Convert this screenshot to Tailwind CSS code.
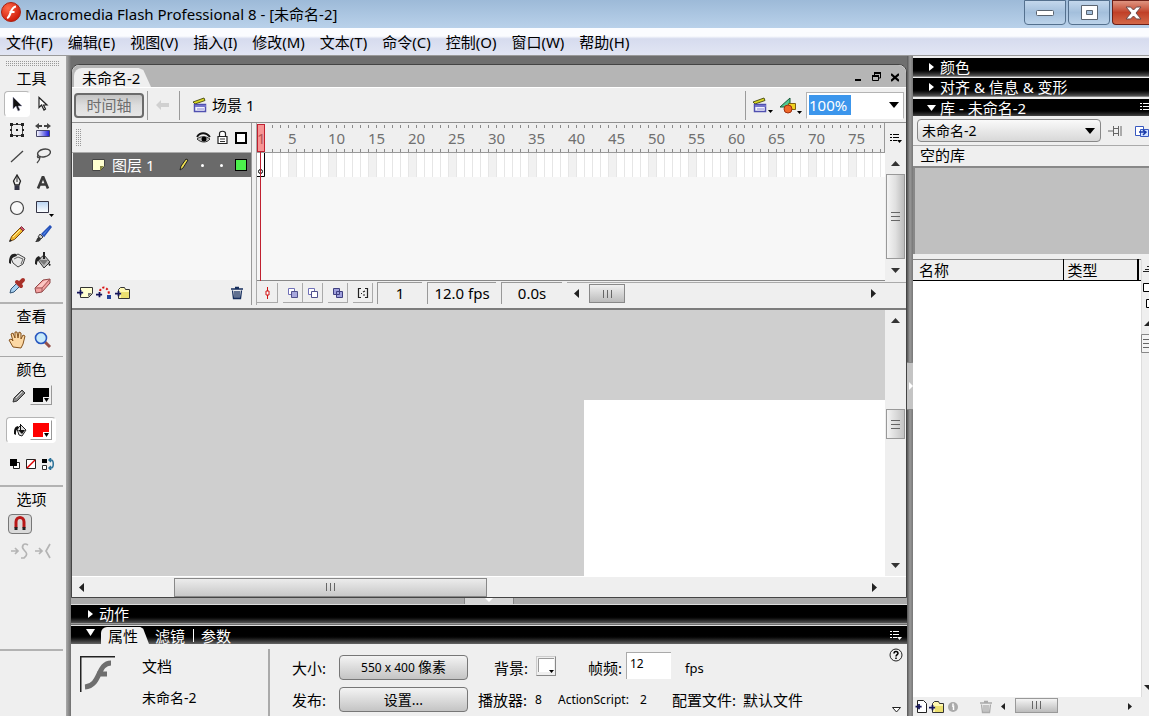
<!DOCTYPE html>
<html lang="zh-CN">
<head>
<meta charset="utf-8">
<title>Macromedia Flash Professional 8 - [未命名-2]</title>
<script src="https://cdn.jsdelivr.net/npm/@tailwindcss/browser@4"></script>
</head>
<body class="flex h-screen flex-col overflow-hidden bg-[#7c7c7c] font-['Noto_Sans','Noto_Sans_CJK_SC',sans-serif] text-[15px] leading-5 text-black">

<svg class="absolute size-0" aria-hidden="true">
  <defs>
    <pattern id="ticks" width="8" height="30" patternUnits="userSpaceOnUse"><path d="M7.500 2v3M7.500 26v4" stroke="#8a8a8a"/></pattern>
    <pattern id="frames" width="40" height="24" patternUnits="userSpaceOnUse"><rect width="40" height="24" fill="#fff"/><rect x="32" width="8" height="24" fill="#f1f1f1"/><path d="M7.500 0v24M15.500 0v24M23.500 0v24M31.500 0v24M39.500 0v24" stroke="#e6e6e6"/></pattern>
    <linearGradient id="blueFade"><stop offset="0" stop-color="#fff"/><stop offset="1" stop-color="#1414d8"/></linearGradient>
    <linearGradient id="sky" x2="0" y2="1"><stop offset="0" stop-color="#b8d4f4"/><stop offset="1" stop-color="#fff"/></linearGradient>
    <radialGradient id="flash" cx=".35" cy=".3" r=".8"><stop offset="0" stop-color="#ff6a4a"/><stop offset="1" stop-color="#c81000"/></radialGradient>
    <symbol id="clap" viewBox="0 0 16 16"><path d="M1 5L12 1l1 2.500L3 7z" fill="#d8d820" stroke="#55551a"/><path d="M2.500 7.500h11v7h-11z" fill="#f4f4ff" stroke="#5050b0" stroke-width="1.500"/><path d="M3 8h11v2H3z" fill="#7474cc"/><path d="M5 12h7" stroke="#8a8ad0"/></symbol>
    <symbol id="menuico" viewBox="0 0 12 11"><path d="M0 1.500h2M3 1.500h6M0 4.500h2M3 4.500h6M0 7.500h2M3 7.500h4" stroke="currentColor"/><path d="M7 7h5l-2.500 3z" fill="currentColor"/></symbol>
    <symbol id="plusmark" viewBox="0 0 8 8"><path d="M0 4h7M4 1v6" stroke="#14145a" stroke-width="2"/></symbol>
    <symbol id="folder" viewBox="0 0 16 14"><path d="M3.500 12.500v-9l2-2h4l1 2h4v9z" fill="#fff8b0" stroke="#333"/><path d="M6 6h8v6H6z" fill="#ece070"/><use href="#plusmark" y="4" width="7" height="7"/></symbol>
    <symbol id="trash" viewBox="0 0 14 14"><path d="M1 3h12M5 1.500h4M2.500 4.500l1 8h7l1-8M5 5v7M7 5v7M9 5v7" fill="none" stroke="currentColor" stroke-width="1.300"/></symbol>
  </defs>
</svg>

<header class="flex h-7 shrink-0 items-center bg-gradient-to-b from-[#9dbad8] to-[#b9d1ea]">
  <svg class="mb-1 ml-px size-5" viewBox="0 0 20 20"><circle cx="10" cy="10" r="9.500" fill="url(#flash)" stroke="#a82414"/><path d="M6 16c4-1 3-11 9-11.500M8.500 10h5" fill="none" stroke="#fff" stroke-width="2.200"/></svg>
  <h1 class="mb-px ml-1 flex-1 whitespace-nowrap text-[15px]">Macromedia Flash Professional 8 - [未命名-2]</h1>
  <div class="flex gap-[2px] self-start">
    <button aria-label="最小化" class="flex h-[25px] w-[42px] items-center justify-center rounded-b-sm border border-[#54708e] bg-gradient-to-b from-[#c3d7ec] via-[#a3bfdc] to-[#bcd3ea]"><svg class="h-[6px] w-[18px]" viewBox="0 0 18 6"><rect x=".5" y=".5" width="17" height="5" rx="1" fill="#fff" stroke="#5a6470"/></svg></button>
    <button aria-label="最大化" class="flex h-[25px] w-[42px] items-center justify-center rounded-b-sm border border-[#54708e] bg-gradient-to-b from-[#c3d7ec] via-[#a3bfdc] to-[#bcd3ea]"><svg class="h-[15px] w-[17px]" viewBox="0 0 17 15"><path d="M.5 .5h16v14H.500zM5.500 5.500h6v4h-6z" fill="#fff" fill-rule="evenodd" stroke="#5a6470"/></svg></button>
    <button aria-label="关闭" class="flex h-[25px] w-[37px] items-center justify-center rounded-bl-sm border border-r-0 border-[#6c2018] bg-gradient-to-b from-[#df9480] via-[#c04028] to-[#d46848]"><svg class="ml-[4px] h-[14px] w-[17px]" viewBox="0 0 17 14"><path d="M1 1h4.500L8.500 4l3-3H16l-5 6 5 6h-4.500l-3-3-3 3H1l5-6z" fill="#fff" stroke="#6b4a4a"/></svg></button>
  </div>
</header>

<nav class="flex h-7 shrink-0 items-center gap-[15px] border-b border-[#9a9a9a] bg-gradient-to-b from-[#fbfcff] from-30% via-[#d6dbee] via-40% to-[#e2e6f4] pl-[6px] whitespace-nowrap">
  <button>文件(F)</button><button>编辑(E)</button><button>视图(V)</button><button>插入(I)</button><button>修改(M)</button><button>文本(T)</button><button>命令(C)</button><button>控制(O)</button><button>窗口(W)</button><button>帮助(H)</button>
</nav>

<main class="flex min-h-0 flex-1">

  <aside class="flex w-[66px] shrink-0 flex-col bg-[#efefef] pr-[3px]">
    <svg class="mt-[5px] ml-[6px] h-[6px] w-[54px]"><path d="M0 .5h54M0 2.500h54M0 4.500h54" stroke="#999" stroke-dasharray="1 1"/></svg>
    <h2 class="mt-px text-center">工具</h2>
    <div class="mt-[3px] ml-[4px] grid grid-cols-[26px_26px] auto-rows-[26px]">
      <button aria-label="选择" class="flex items-center justify-center rounded-sm border border-r-white border-b-white border-[#b8b8b8] bg-white"><svg class="size-4" viewBox="0 0 16 16"><path d="M4 1v12l3-3 2 5 2-1-2-4h4z" fill="#111" stroke="#99b" stroke-width=".5"/></svg></button>
      <button aria-label="部分选取" class="flex items-center justify-center"><svg class="size-4" viewBox="0 0 16 16"><path d="M4 1.500v10l2.500-2.500 2.500 5 1.500-1-2-4H12z" fill="#fff" stroke="#222" stroke-width="1.200"/></svg></button>
      <button aria-label="任意变形" class="flex items-center justify-center"><svg class="size-4" viewBox="0 0 16 16"><path d="M2.500 2.500h11v11h-11z" fill="none" stroke="#444"/><path d="M1 1h3v3H1zM12 1h3v3h-3zM1 12h3v3H1zM12 12h3v3h-3zM7 1h2v2H7zM7 13h2v2H7zM1 7h2v2H1zM13 7h2v2h-2zM7 7h2v2H7z" fill="#222"/></svg></button>
      <button aria-label="填充变形" class="flex items-center justify-center"><svg class="size-4" viewBox="0 0 16 16"><path d="M0 4l4-3v2h2v2H4v2zM16 4l-4-3v2h-2v2h2v2zM6 3h1v2H6zM9 3h1v2H9z" fill="#444"/><path d="M1.500 8.500h13v6h-13z" fill="url(#blueFade)" stroke="#446"/></svg></button>
      <button aria-label="线条" class="flex items-center justify-center"><svg class="size-4" viewBox="0 0 16 16"><path d="M2 14L14 3" stroke="#444" stroke-width="1.300"/></svg></button>
      <button aria-label="套索" class="flex items-center justify-center"><svg class="size-4" viewBox="0 0 16 16"><ellipse cx="9" cy="5" rx="6.500" ry="3.800" transform="rotate(-12 9 5)" fill="none" stroke="#444" stroke-width="1.400"/><path d="M4 7c-3 1-1 4 1 2 0 2-1 4-3 6" fill="none" stroke="#444" stroke-width="1.300"/></svg></button>
      <button aria-label="钢笔" class="flex items-center justify-center"><svg class="size-4" viewBox="0 0 16 16"><path d="M8 1L4.500 7l1.500 4h4l1.500-4z" fill="#eee" stroke="#222" stroke-width="1.300"/><path d="M8 2v6" stroke="#222"/><path d="M5.500 11.500h5V16h-5z" fill="#334"/></svg></button>
      <button aria-label="文本" class="flex items-center justify-center"><svg class="size-4" viewBox="0 0 16 16"><path d="M3 14.500L8 2.500l5 12M4.500 10.500h7" fill="none" stroke="#3a3a3a" stroke-width="2.600" stroke-linejoin="bevel"/></svg></button>
      <button aria-label="椭圆" class="flex items-center justify-center"><svg class="size-4" viewBox="0 0 16 16"><circle cx="8" cy="8" r="6.500" fill="#f8f8f8" stroke="#444" stroke-width="1.200"/></svg></button>
      <button aria-label="矩形" class="flex items-center justify-center"><svg class="ml-[3px] h-[17px] w-[19px]" viewBox="0 0 19 17"><path d="M1.500 1.500h12v11h-12z" fill="url(#sky)" stroke="#334"/><path d="M14 14h5l-2.500 3z" fill="#000"/></svg></button>
      <button aria-label="铅笔" class="flex items-center justify-center"><svg class="size-[18px]" viewBox="0 0 18 18"><path d="M2 16l1.500-4.500L12 3l3 3-8.500 8.500z" fill="#f0b830" stroke="#7a4a10"/><path d="M12 3l1.500-1.500 3 3L15 6z" fill="#d05868" stroke="#803040"/><path d="M1 17l1-3 2 2z" fill="#222"/><path d="M5 12l7-7" stroke="#fff0a0"/></svg></button>
      <button aria-label="刷子" class="flex items-center justify-center"><svg class="size-[18px]" viewBox="0 0 18 18"><path d="M8 9l8-8 1 1-7 9z" fill="#5a90f0" stroke="#2450b8" stroke-width="1.500"/><path d="M6 9l3 3-2 2-3-2z" fill="#ccc" stroke="#444"/><path d="M1 17c2-1 1-4 4-5l2 2c-1 3-4 3-6 3z" fill="#333"/></svg></button>
      <button aria-label="墨水瓶" class="flex items-center justify-center"><svg class="size-[18px]" viewBox="0 0 18 18"><path d="M3 7l7-4 7 4-2 6-5 3-5-4z" fill="#e8e8e8" stroke="#444"/><path d="M6 8l4-2 5 2-2 5" fill="none" stroke="#666"/><path d="M8 3C4 2 1 4 1 12l2 1c0-5 1-7 6-8z" fill="#222"/></svg></button>
      <button aria-label="颜料桶" class="flex items-center justify-center"><svg class="size-[18px]" viewBox="0 0 18 18"><path d="M4 9l6-5 6 7-6 6z" fill="#bbb" stroke="#333"/><path d="M5 9h9l-4 5z" fill="#777"/><path d="M9 8V1h2v7M5 5C2 6 1 8 1 13l2 1c0-4 1-5 4-6z" fill="#222"/><path d="M14 11l3 3-2 1z" fill="#222"/></svg></button>
      <button aria-label="滴管" class="flex items-center justify-center"><svg class="size-[18px]" viewBox="0 0 18 18"><path d="M2 16l1-4 6-6 3 3-6 6z" fill="#a8d0f0" stroke="#357"/><path d="M9 5l4 4M12 6l3-3" stroke="#a83028" stroke-width="4" stroke-linecap="round"/></svg></button>
      <button aria-label="橡皮擦" class="flex items-center justify-center"><svg class="size-[18px]" viewBox="0 0 18 18"><path d="M1 11l8-8 7-1v4l-8 9-6 1z" fill="#f4a0a0" stroke="#904848"/><path d="M1 11l7 0 8-9M8 11v4" fill="none" stroke="#a05858"/><path d="M3 10l7-6 4-1-6 7z" fill="#fcc8c4"/></svg></button>
    </div>
    <div class="mt-[3px] border-t-2 border-[#b2b2b2] pt-[2px]">
      <h2 class="text-center">查看</h2>
      <div class="ml-[4px] grid h-[28px] grid-cols-[26px_26px] place-items-center">
        <button aria-label="手形"><svg class="size-[18px]" viewBox="0 0 18 18"><path d="M5 16L1 9l2-1 2 2-2-7 2-1 2 5V1h2l1 6 1-6 2 1v6l2-4 2 1-2 8-2 4z" fill="#fcd8a4" stroke="#85521c"/></svg></button>
        <button aria-label="缩放"><svg class="size-[18px]" viewBox="0 0 18 18"><path d="M11 11l5 5" stroke="#955048" stroke-width="3"/><circle cx="7" cy="7" r="5.500" fill="#c8eafa" stroke="#2858c0" stroke-width="1.600"/></svg></button>
      </div>
    </div>
    <div class="mt-[2px] border-t border-[#a8a8a8] pt-[2px]">
      <h2 class="text-center">颜色</h2>
      <div class="mt-[2px] flex h-7 items-center pl-[12px]">
        <svg class="size-[15px]" viewBox="0 0 15 15"><path d="M1 14l1-4 8-8 3 3-8 8z" fill="#888" stroke="#333"/><path d="M4 10l6-6" stroke="#ddd"/></svg>
        <button aria-label="笔触颜色" class="ml-[3px] border border-[#efefef] border-r-[#999] border-b-[#999] p-px"><svg class="h-[16px] w-[18px]" viewBox="0 0 18 16"><path d="M1 1h16v14H1z"/><path d="M11 10h7v6h-7z" fill="#eee"/><path d="M12 11h5l-2.500 4z"/></svg></button>
      </div>
      <div class="mt-[8px] mr-[7px] ml-[6px] flex h-[26px] items-center rounded-sm border border-[#b4b4b4] border-r-white border-b-white bg-white pl-[6px]">
        <svg class="size-[14px]" viewBox="0 0 14 14"><path d="M4 6l4-4 5 5-4 6-3-1z" fill="#ddd" stroke="#222"/><path d="M5 7h7l-3 4zM7 1h1v6H7zM5 3C1 4 1 7 1 11l2 1c0-4 0-5 3-7z" fill="#111"/></svg>
        <button aria-label="填充颜色" class="ml-[3px] border border-white border-r-[#999] border-b-[#999] p-px"><svg class="h-[16px] w-[18px]" viewBox="0 0 18 16"><path d="M1 1h16v14H1z" fill="#f00"/><path d="M11 10h7v6h-7z" fill="#fff"/><path d="M12 11h5l-2.500 4z"/></svg></button>
      </div>
      <div class="mt-[15px] flex gap-[4px] pl-[9px]">
        <button aria-label="黑白"><svg class="size-3" viewBox="0 0 12 12"><path d="M4.500 4.500h6v6h-6z" fill="#fff" stroke="#222"/><path d="M1 1h7v7H1z"/></svg></button>
        <button aria-label="没有颜色"><svg class="size-3" viewBox="0 0 12 12"><path d="M1.500 1.500h9v9h-9z" fill="#fff" stroke="#222"/><path d="M2 10l8-8" stroke="#d00" stroke-width="1.500"/></svg></button>
        <button aria-label="交换颜色"><svg class="h-3 w-[14px]" viewBox="0 0 14 12"><path d="M1 1h5v4H1z"/><path d="M1.500 7.500h4v4h-4z" fill="#fff" stroke="#333"/><path d="M8 2h2c3 0 3 8 0 8H8M10 0L8 2l2 2M10 8l-2 2 2 2" fill="none" stroke="#287098" stroke-width="1.500"/></svg></button>
      </div>
    </div>
    <div class="mt-[15px] border-t-2 border-[#b2b2b2] pt-[2px]">
      <h2 class="text-center">选项</h2>
      <button aria-label="贴紧至对象" class="mt-[5px] ml-[8px] flex h-5 w-6 items-center justify-center rounded-sm border border-[#777] bg-[#dadada]"><svg class="h-4 w-[14px]" viewBox="0 0 14 16"><path d="M3 12V6c0-6 8-6 8 0v6" fill="none" stroke="#b81818" stroke-width="3"/><path d="M1.500 11h3v3h-3zM9.500 11h3v3h-3z" fill="#222"/></svg></button>
      <div class="mt-[9px] flex gap-[6px] pl-[11px] text-[#b4b4b4]">
        <button aria-label="平滑"><svg class="h-4 w-[18px]" viewBox="0 0 18 16"><path d="M0 8h7M4 5l3 3-3 3M17 2c-5-3-7 2-4 5s4 5 0 8h-3" fill="none" stroke="currentColor" stroke-width="1.700"/></svg></button>
        <button aria-label="伸直"><svg class="h-4 w-[17px]" viewBox="0 0 17 16"><path d="M0 8h7M4 5l3 3-3 3M15 1l-4 7 4 7" fill="none" stroke="currentColor" stroke-width="1.700"/></svg></button>
      </div>
    </div>
    <div class="mt-[90px] flex-1 border-t-2 border-[#b2b2b2]"></div>
  </aside>

  <div class="flex min-w-0 flex-1 flex-col bg-gradient-to-r from-[#ababab] to-[#6f6f6f] to-[5px] pt-2 pl-[5px]">

    <section class="flex min-h-0 flex-1 flex-col rounded-t-lg border border-[#444] bg-[#efefef]">
      <div class="flex h-[22px] shrink-0 items-end justify-between rounded-t-lg bg-[#b5b5b5] pr-[7px] pl-[2px]">
        <h2 class="h-[19px] w-[77px] rounded-tl-lg bg-[#efefef] pl-[8px] whitespace-nowrap [clip-path:polygon(0_0,84%_0,90%_10%,100%_100%,0_100%)]">未命名-2</h2>
        <div class="mb-[5px] flex gap-[10px]">
          <button aria-label="最小化文档"><svg class="h-[10px] w-[8px]" viewBox="0 0 8 10"><path d="M1 8h6" stroke="#000" stroke-width="2"/></svg></button>
          <button aria-label="还原文档"><svg class="h-[10px] w-[9px]" viewBox="0 0 9 10"><path d="M2.500 3V1h6v5H7M.500 4.500h6v4h-6z" fill="none" stroke="#000"/><path d="M2 1h7M0 4h7" stroke="#000" stroke-width="2"/></svg></button>
          <button aria-label="关闭文档"><svg class="h-[10px] w-[8px]" viewBox="0 0 8 10"><path d="M0 2l8 7M8 2L0 9" stroke="#000" stroke-width="2.200"/></svg></button>
        </div>
      </div>

      <div class="flex h-9 shrink-0 items-center border-t border-b border-t-white border-b-[#909090] pr-[2px] pl-[2px]">
        <button class="h-[25px] w-[70px] rounded-sm border-2 border-[#6b6b6b] bg-gradient-to-b from-[#c4c4c4] via-[#dedede] to-[#e6e6e6] leading-5 text-[#6e6e6e]">时间轴</button>
        <span class="ml-[3px] h-[29px] w-px bg-[#9a9a9a]"></span>
        <button aria-label="后退" class="ml-[8px]"><svg class="h-[10px] w-[14px]" viewBox="0 0 14 10"><path d="M0 5l5-5v3h8v4H5v3z" fill="#d0d0d0"/></svg></button>
        <span class="ml-[9px] h-[29px] w-px bg-[#9a9a9a]"></span>
        <svg class="ml-[12px] size-4"><use href="#clap"/></svg>
        <span class="ml-[4px] flex-1">场景 1</span>
        <span class="h-[29px] w-px bg-[#9a9a9a]"></span>
        <button aria-label="编辑场景" class="ml-[6px] flex items-end"><svg class="size-4"><use href="#clap"/></svg><svg class="h-[3px] w-[5px]"><path d="M0 0h5l-2.500 3z"/></svg></button>
        <button aria-label="编辑元件" class="ml-[6px] flex items-end"><svg class="h-[17px] w-[18px]" viewBox="0 0 18 17"><path d="M1 10L11 1v9z" fill="#50c890" stroke="#185838"/><path d="M9.500 6.500h7v6h-7z" fill="#f0d020" stroke="#806010"/><circle cx="9" cy="12" r="4" fill="#f06828" stroke="#a03010"/></svg><svg class="h-[3px] w-[5px]"><path d="M0 0h5l-2.500 3z"/></svg></button>
        <div class="ml-[4px] flex h-[27px] w-[98px] items-center border border-[#b4b4b4] border-b-white bg-white pl-[2px]">
          <input aria-label="缩放比例" value="100%" class="h-5 w-[42px] bg-[#3c96ec] text-[15px] text-white outline-none">
          <button aria-label="缩放选项" class="flex flex-1 justify-end pr-[4px]"><svg class="h-[6px] w-[10px]"><path d="M0 0h10L5 6z"/></svg></button>
        </div>
      </div>

      <div class="flex h-[187px] shrink-0 border-b-2 border-[#7c7c7c] pb-[3px]">
        <div class="flex w-[180px] shrink-0 flex-col border-r border-[#999]">
          <div class="flex h-[30px] items-center border-b border-[#aaa] pr-[4px] pl-[4px]">
            <svg class="h-[18px] w-[5px]"><path d="M.5 0v18M2.500 0v18M4.500 0v18" stroke="#999" stroke-dasharray="1 1"/></svg>
            <span class="flex-1"></span>
            <svg class="h-[12px] w-[15px]" viewBox="0 0 15 12"><path d="M1 5c3-5 9-5 13 0" fill="none" stroke="#111" stroke-width="1.800"/><path d="M1 7c3-3 9-3 13 0-3 4-9 4-13 0z" fill="#bbb" stroke="#333"/><circle cx="8" cy="7" r="2.500"/></svg>
            <svg class="ml-[6px] h-[15px] w-[11px]" viewBox="0 0 11 15"><path d="M2.500 6V3.500c0-3 6-3 6 0V6M1 6.500h9v7H1z" fill="#fff" stroke="#222" stroke-width="1.200"/><path d="M3 9h5M3 11.500h5" stroke="#333"/></svg>
            <svg class="ml-[7px] size-[12px]" viewBox="0 0 12 12"><path d="M1 1h10v10H1z" fill="#fff" stroke="#000" stroke-width="2"/></svg>
          </div>
          <div class="ml-px flex h-6 items-center bg-[#6a6a6a] pr-[4px] pl-[19px] text-white">
            <svg class="size-[13px]" viewBox="0 0 13 13"><path d="M.5 .5h12v7l-4 4h-8z" fill="#ffffd0" stroke="#444"/><path d="M12 7H8v5z" fill="#888840"/></svg>
            <span class="ml-[7px] flex-1">图层 1</span>
            <svg class="h-[14px] w-[11px]" viewBox="0 0 11 14"><path d="M2 12l1-4 5-7 2 1-5 8z" fill="#f0e050" stroke="#222"/></svg>
            <span class="ml-[12px] size-[3px] rounded-full bg-white"></span>
            <span class="ml-[16px] size-[3px] rounded-full bg-white"></span>
            <span class="ml-[12px] size-[12px] border border-black bg-[#4cf04c]"></span>
          </div>
          <div class="flex-1 bg-[#f7f7f7]"></div>
          <div class="flex h-[25px] items-center gap-[3px] pr-[7px] pl-[5px]">
            <button aria-label="插入图层"><svg class="h-[14px] w-4" viewBox="0 0 16 14"><path d="M3.500 1.500h12v6l-4 4h-8z" fill="#ffffd0" stroke="#333"/><path d="M15 7h-4v4z" fill="#777"/><use href="#plusmark" y="3" width="7" height="7"/></svg></button>
            <button aria-label="添加引导层"><svg class="h-[14px] w-4" viewBox="0 0 16 14"><path d="M4 5c1-5 8-5 9 3" fill="none" stroke="#d81010" stroke-width="2" stroke-dasharray="2 2"/><use href="#plusmark" y="5" width="7" height="7"/><path d="M11 9h4v4h-4z" fill="#24449c"/></svg></button>
            <button aria-label="插入图层文件夹"><svg class="h-[14px] w-4"><use href="#folder"/></svg></button>
            <span class="flex-1"></span>
            <button aria-label="删除图层" class="text-[#142c5c]"><svg class="size-[14px]"><use href="#trash"/></svg></button>
          </div>
        </div>

        <div class="ml-[4px] flex min-w-0 flex-1 flex-col border-l border-[#aaa]">
          <div class="flex min-h-0 flex-1">
            <div class="relative flex min-w-0 flex-1 flex-col overflow-hidden">
              <div class="relative h-[30px] shrink-0 border-r border-b border-[#999]">
                <svg class="h-full w-full"><rect width="100%" height="30" fill="url(#ticks)"/></svg>
                <div class="absolute inset-0 flex items-center overflow-hidden text-[15px] text-[#707070]">
                  <span class="w-[31px] shrink-0">1</span><span class="w-10 shrink-0">5</span><span class="w-10 shrink-0">10</span><span class="w-10 shrink-0">15</span><span class="w-10 shrink-0">20</span><span class="w-10 shrink-0">25</span><span class="w-10 shrink-0">30</span><span class="w-10 shrink-0">35</span><span class="w-10 shrink-0">40</span><span class="w-10 shrink-0">45</span><span class="w-10 shrink-0">50</span><span class="w-10 shrink-0">55</span><span class="w-10 shrink-0">60</span><span class="w-10 shrink-0">65</span><span class="w-10 shrink-0">70</span><span class="w-10 shrink-0">75</span>
                </div>
              </div>
              <svg class="h-6 w-full shrink-0"><rect width="100%" height="24" fill="url(#frames)"/><path d="M7.500 0v23.500H0" fill="none" stroke="#000"/><circle cx="3.500" cy="18.500" r="2" fill="#fff" stroke="#000"/></svg>
              <div class="flex-1 border-b border-[#888] bg-[#f7f7f7]"></div>
              <div class="absolute top-px left-0 h-[28px] w-[8px] border border-[#c02030] bg-[#ff3c3c]/50"></div>
              <div class="absolute top-[29px] bottom-0 left-[3px] w-px bg-[#c02030]"></div>
            </div>
            <div class="flex w-[21px] flex-col items-center">
              <button aria-label="时间轴选项" class="flex h-[30px] items-center"><svg class="h-[11px] w-3"><use href="#menuico"/></svg></button>
              <button aria-label="向上滚动" class="flex h-[21px] items-center"><svg class="h-[5px] w-[9px]"><path d="M0 5h9L4.500 0z" fill="#333"/></svg></button>
              <div class="flex h-[85px] w-[19px] items-center justify-center border border-[#999] bg-gradient-to-r from-[#f4f4f4] via-[#e0e0e0] to-[#bcbcbc]"><svg class="h-[11px] w-[9px]"><path d="M0 1.500h9M0 5.500h9M0 9.500h9" stroke="#666"/></svg></div>
              <button aria-label="向下滚动" class="flex flex-1 items-center"><svg class="h-[5px] w-[9px]"><path d="M0 0h9L4.500 5z" fill="#333"/></svg></button>
            </div>
          </div>
          <div class="flex h-[24px] shrink-0 items-center">
            <button aria-label="滚动到播放头" class="flex h-[20px] w-[21px] items-center justify-center border-r border-b border-[#aaa]"><svg class="h-[12px] w-[5px]" viewBox="0 0 5 12"><path d="M2.500 0v12" stroke="#d01010"/><path d="M1 4h3v4H1z" fill="#fff" stroke="#d01010"/></svg></button>
            <button aria-label="绘图纸外观" class="ml-[5px] flex h-[20px] w-[20px] items-center justify-center border-r border-b border-[#aaa]"><svg class="size-3" viewBox="0 0 12 12"><path d="M1.500 1.500h6v6h-6z" fill="#fff" stroke="#7070b8"/><path d="M4.500 4.500h6v6h-6z" fill="#a8a8dc" stroke="#50508c"/></svg></button>
            <button aria-label="绘图纸外观轮廓" class="flex h-[20px] w-[20px] items-center justify-center border-r border-b border-[#aaa]"><svg class="size-3" viewBox="0 0 12 12"><path d="M1.500 1.500h6v6h-6z" fill="#fff" stroke="#7070b8"/><path d="M4.500 4.500h6v6h-6z" fill="#fff" stroke="#50508c"/></svg></button>
            <button aria-label="编辑多个帧" class="ml-[5px] flex h-[20px] w-[20px] items-center justify-center border-r border-b border-[#aaa]"><svg class="size-3" viewBox="0 0 12 12"><path d="M1.500 1.500h6v6h-6zM4.500 4.500h6v6h-6z" fill="#a0a0dc" stroke="#404080"/></svg></button>
            <button aria-label="修改绘图纸标记" class="ml-[5px] flex h-[20px] w-[20px] items-center justify-center border-r border-b border-[#aaa]"><svg class="size-3" viewBox="0 0 12 12"><path d="M4 1.500H1.500v9H4M8 1.500h2.500v9H8M4 6.500h1M6 5l2-1M6 8h2" fill="none" stroke="#222" stroke-width="1.200"/></svg></button>
            <output class="ml-[4px] h-[22px] w-[45px] border-t border-l border-[#999] text-center">1</output>
            <output class="ml-[5px] h-[22px] w-[69px] border-t border-l border-[#999] text-center whitespace-nowrap">12.0 fps</output>
            <output class="ml-[5px] h-[22px] w-[61px] border-t border-l border-[#999] text-center">0.0s</output>
            <div class="ml-[5px] flex h-[22px] flex-1 items-center border-t border-[#aaa] pr-[30px] pl-[7px]">
              <button aria-label="向左滚动"><svg class="h-[9px] w-[5px]"><path d="M5 0v9L0 4.500z" fill="#222"/></svg></button>
              <div class="ml-[10px] flex h-[19px] w-[36px] items-center justify-center border border-[#888] bg-gradient-to-b from-[#f0f0f0] to-[#bcbcbc]"><svg class="h-[8px] w-[11px]"><path d="M1.500 0v8M5.500 0v8M9.500 0v8" stroke="#666"/></svg></div>
              <span class="flex-1"></span>
              <button aria-label="向右滚动"><svg class="h-[9px] w-[5px]"><path d="M0 0v9l5-4.500z" fill="#222"/></svg></button>
            </div>
          </div>
        </div>
      </div>

      <div class="flex min-h-0 flex-1">
        <div class="flex flex-1 items-end justify-end bg-[#cfcfcf]"><div class="h-[66%] w-[37%] bg-white"></div></div>
        <div class="flex w-[21px] flex-col items-center">
          <button aria-label="舞台向上滚动" class="flex h-[21px] items-center"><svg class="h-[5px] w-[9px]"><path d="M0 5h9L4.500 0z" fill="#333"/></svg></button>
          <span class="h-[78px]"></span>
          <div class="flex h-[30px] w-[19px] items-center justify-center border border-[#999] bg-gradient-to-r from-[#f4f4f4] to-[#c4c4c4]"><svg class="h-[11px] w-[9px]"><path d="M0 1.500h9M0 5.500h9M0 9.500h9" stroke="#666"/></svg></div>
          <span class="flex-1"></span>
          <button aria-label="舞台向下滚动" class="flex h-[21px] items-center"><svg class="h-[5px] w-[9px]"><path d="M0 0h9L4.500 5z" fill="#333"/></svg></button>
        </div>
      </div>
      <div class="flex h-[21px] shrink-0 items-center border-t border-white pr-[29px] pl-[7px]">
        <button aria-label="舞台向左滚动"><svg class="h-[9px] w-[5px]"><path d="M5 0v9L0 4.500z" fill="#222"/></svg></button>
        <div class="ml-[90px] flex h-[19px] w-[313px] items-center justify-center border border-[#888] bg-gradient-to-b from-[#ececec] to-[#c8c8c8]"><svg class="h-[8px] w-[11px]"><path d="M1.500 0v8M5.500 0v8M9.500 0v8" stroke="#666"/></svg></div>
        <span class="flex-1"></span>
        <button aria-label="舞台向右滚动"><svg class="h-[9px] w-[5px]"><path d="M0 0v9l5-4.500z" fill="#222"/></svg></button>
      </div>
    </section>

    <div class="flex h-[6px] shrink-0 justify-center bg-[#ababab]"><button aria-label="折叠面板" class="flex w-[50px] justify-center border-x border-[#888] bg-[#d4d4d4]"><svg class="h-1 w-2"><path d="M0 0h8L4 4z" fill="#fff"/></svg></button></div>

    <div class="flex h-[20px] shrink-0 items-center gap-[6px] border-t border-b border-t-[#ddd] border-b-[#999] bg-gradient-to-b from-black from-60% to-[#555] pl-[17px] text-white">
      <svg class="h-2 w-[5px]"><path d="M0 0v8l5-4z" fill="#fff"/></svg><h2 class="leading-[18px]">动作</h2>
    </div>

    <section class="mt-px flex h-[91px] shrink-0 flex-col bg-[#efefef]">
      <div class="flex h-[19px] shrink-0 items-end border-t border-[#ddd] bg-gradient-to-b from-black from-50% to-[#666] pr-[5px] pl-[15px] text-white">
        <svg class="mb-[8px] h-[7px] w-[9px]"><path d="M0 0h9L4.500 7z" fill="#fff"/></svg>
        <button class="ml-[6px] h-[17px] w-[48px] rounded-tl-md bg-[#efefef] pl-[7px] text-left leading-[18px] text-black [clip-path:polygon(0_0,82%_0,88%_10%,100%_100%,0_100%)]">属性</button>
        <button class="ml-[6px] h-[17px] leading-[18px]">滤镜</button>
        <span class="mb-[2px] ml-[8px] h-[13px] w-px bg-white"></span>
        <button class="ml-[7px] h-[17px] leading-[18px]">参数</button>
        <span class="flex-1"></span>
        <button aria-label="属性面板选项" class="mb-[3px]"><svg class="h-[11px] w-3"><use href="#menuico"/></svg></button>
      </div>
      <div class="flex flex-1 pl-[9px]">
        <svg class="mt-[12px] size-[36px] shrink-0" viewBox="0 0 36 36"><path d="M35 .5H.500V36" fill="none" stroke="#222" stroke-width="2"/><path d="M5 31c16-1 12-24 26-24M17 18h10" fill="none" stroke="#6e6e6e" stroke-width="5"/></svg>
        <div class="flex w-[152px] shrink-0 flex-col gap-[12px] pt-[12px] pl-[26px] whitespace-nowrap"><span>文档</span><span class="text-[14px]">未命名-2</span></div>
        <span class="mt-[5px] w-[2px] bg-[#aaa]"></span>
        <div class="flex flex-1 flex-col gap-[7px] pt-[11px] pl-[22px] whitespace-nowrap text-[12px]">
          <div class="flex h-[25px] items-center">
            <span class="w-[47px] text-[15px]">大小:</span>
            <button class="h-[25px] w-[129px] rounded-sm border border-[#777] bg-gradient-to-b from-[#f4f4f4] to-[#c4c4c4]">550 x 400 <span class="text-[14px]">像素</span></button>
            <span class="ml-[26px] w-[42px] text-[15px]">背景:</span>
            <button aria-label="背景颜色" class="mb-[4px] size-[20px] border border-[#ccc] border-r-[#888] border-b-[#888]"><svg class="size-full" viewBox="0 0 18 18"><path d="M1 1h16v14H1z" fill="#fff"/><path d="M1.500 15V1.500H17" fill="none" stroke="#999"/><path d="M12 13h5l-2.500 3z"/></svg></button>
            <label for="fps" class="ml-[32px] w-[38px] text-[15px]">帧频:</label>
            <input id="fps" value="12" class="mb-[4px] h-[27px] w-[45px] border-t border-l border-[#aaa] bg-white pb-[5px] pl-[3px] text-[12px]">
            <span class="ml-[14px] text-[13px]">fps</span>
          </div>
          <div class="flex h-[25px] items-center">
            <span class="w-[47px] text-[15px]">发布:</span>
            <button class="h-[25px] w-[129px] rounded-sm border border-[#777] bg-gradient-to-b from-[#f4f4f4] to-[#c4c4c4] text-[14px]">设置...</button>
            <span class="ml-[10px] w-[57px] text-[15px]">播放器:</span><span class="w-[23px]">8</span><span class="w-[82px]">ActionScript:</span><span class="w-[32px]">2</span>
            <span class="w-[71px] text-[15px]">配置文件:</span><span class="text-[15px]">默认文件</span>
          </div>
        </div>
        <div class="flex flex-col items-center justify-between pt-[4px] pr-[4px] pb-[3px]">
          <button aria-label="帮助"><svg class="size-[14px]" viewBox="0 0 14 14"><circle cx="7" cy="7" r="6" fill="none" stroke="#222"/><path d="M5 5.500c0-3 4-2.500 4 0 0 1-2 1.500-2 3M7 9.500v1.500" fill="none" stroke="#000" stroke-width="1.500"/></svg></button>
          <button aria-label="展开"><svg class="h-[6px] w-[9px]"><path d="M.5 .5h8l-4 4.500z" fill="#fff" stroke="#222"/></svg></button>
        </div>
      </div>
    </section>
  </div>

  <div class="flex w-[6px] shrink-0 items-center bg-gradient-to-r from-[#555] via-[#999] to-[#777]"><button aria-label="折叠右侧面板" class="flex h-[48px] w-full items-center justify-end border-y border-[#888] bg-[#c4c4c4]"><svg class="h-2 w-1"><path d="M0 0v8l4-4z" fill="#fff"/></svg></button></div>

  <aside class="flex w-[236px] shrink-0 flex-col overflow-hidden bg-[#efefef] pt-px whitespace-nowrap">
    <div class="flex h-[20px] shrink-0 items-center gap-[6px] border-t border-b border-t-[#eee] border-b-[#888] bg-gradient-to-b from-black from-60% to-[#555] pl-[16px] text-white"><svg class="h-2 w-[5px]"><path d="M0 0v8l5-4z" fill="#fff"/></svg><h2>颜色</h2></div>
    <div class="mb-px flex h-[20px] shrink-0 items-center gap-[6px] border-t border-b border-t-[#eee] border-b-[#888] bg-gradient-to-b from-black from-60% to-[#555] pl-[16px] text-white"><svg class="h-2 w-[5px]"><path d="M0 0v8l5-4z" fill="#fff"/></svg><h2>对齐 &amp; 信息 &amp; 变形</h2></div>
    <div class="flex h-[18px] shrink-0 items-center gap-[4px] border-t border-[#eee] bg-gradient-to-b from-black from-60% to-[#444] pl-[14px] text-white"><svg class="h-[6px] w-[9px]"><path d="M0 0h9L4.500 6z" fill="#fff"/></svg><h2 class="flex-1 leading-[18px]">库 - 未命名-2</h2><svg class="h-[11px] w-[9px]" viewBox="0 0 9 11"><path d="M0 1.500h2M3 1.500h6M0 4.500h2M3 4.500h6M0 7.500h2M3 7.500h6" stroke="#fff"/></svg></div>
    <div class="flex h-[30px] shrink-0 items-center border-b border-[#aaa] pl-[4px]">
      <div class="relative h-[23px] w-[185px]">
        <select aria-label="库文档" class="h-full w-full appearance-none rounded-sm border border-[#888] bg-gradient-to-b from-[#fafafa] to-[#d8d8d8] pl-[4px] text-[14px] leading-5"><option>未命名-2</option></select>
        <svg class="pointer-events-none absolute top-[9px] right-[6px] h-[6px] w-[10px]"><path d="M0 0h10L5 6z"/></svg>
      </div>
      <button aria-label="固定当前库" class="ml-[7px]"><svg class="h-[12px] w-[14px]" viewBox="0 0 14 12"><path d="M0 6h5M5.500 1v10M5.500 3.500h5v5h-5M10.500 1v10M13 1v10" fill="none" stroke="#666"/></svg></button>
      <button aria-label="新建库面板" class="ml-[12px]"><svg class="h-[12px] w-[15px]" viewBox="0 0 15 12"><path d="M1.500 1.500h8v9h-8z" fill="#fff" stroke="#3858c0"/><path d="M6.500 4.500h8v7h-8z" fill="#cfe0ff" stroke="#3858c0"/><path d="M5 7h6M9 5l3 2-3 3" fill="none" stroke="#1838a8" stroke-width="1.500"/></svg></button>
    </div>
    <p class="h-5 shrink-0 pl-[7px] leading-[18px]">空的库</p>
    <div class="h-[88px] shrink-0 border-t-2 border-l-2 border-[#888] bg-[#c0c0c0]"></div>
    <div class="mt-[5px] flex min-h-0 flex-1">
      <div class="flex-1 bg-white">
        <table class="w-full table-fixed border-collapse text-left">
          <thead><tr class="h-[21px] border-t border-b border-t-[#888] border-b-black bg-[#efefef]"><th class="border-r border-black p-0 pl-[6px] text-[15px] leading-[18px] font-normal">名称</th><th class="w-[75px] border-r-2 border-black p-0 pl-[4px] text-[15px] leading-[18px] font-normal">类型</th><th aria-label="排序" class="w-[3px] p-0"></th></tr></thead>
        </table>
      </div>
      <div class="flex w-[8px] flex-col items-end border-l border-[#ddd] bg-[#efefef]">
        <svg class="mt-[5px] h-[8px] w-[6px]"><path d="M2 5.500h4M0 7.500h6M4 2.500h2" stroke="#222"/></svg>
        <svg class="mt-[11px] h-[10px] w-[6px]"><path d="M7 .5H.500v8H7" fill="#fff" stroke="#000"/></svg>
        <svg class="mt-[6px] h-[10px] w-[3px]"><path d="M4 .5H.500v8H4" fill="#fff" stroke="#000"/></svg>
        <svg class="mt-[12px] h-[5px] w-[5px]"><path d="M0 5h5V0z" fill="#222"/></svg>
        <svg class="mt-[8px] h-[19px] w-[8px]"><path d="M9 .5H.500v18H9" fill="#f4f4f4" stroke="#888"/><path d="M2 5.500h6M2 9.500h6M2 13.500h6" stroke="#666"/></svg>
        <span class="flex-1"></span>
        <svg class="mb-[7px] h-[5px] w-[5px]"><path d="M0 0h5v5z" fill="#222"/></svg>
      </div>
    </div>
    <div class="flex h-[19px] shrink-0 items-center pr-[17px] pl-[2px]">
      <button aria-label="新建元件"><svg class="h-[13px] w-[12px]" viewBox="0 0 12 13"><path d="M2.500 .5h6l3 3v9h-9z" fill="#fff" stroke="#222"/><use href="#plusmark" y="3" width="8" height="7"/></svg></button>
      <button aria-label="新建文件夹" class="ml-[2px]"><svg class="h-[14px] w-4"><use href="#folder"/></svg></button>
      <button aria-label="属性" class="ml-[2px]"><svg class="size-[12px]" viewBox="0 0 12 12"><circle cx="6" cy="6" r="5" fill="#aaa"/><path d="M5 5h1.500v4M6 2.500v1.500" fill="none" stroke="#fff" stroke-width="1.500"/></svg></button>
      <button aria-label="删除" class="ml-[20px] text-[#aaa]"><svg class="size-[14px]"><use href="#trash"/></svg></button>
      <button aria-label="库向左滚动" class="ml-[8px]"><svg class="h-[7px] w-[4px]"><path d="M4 0v7L0 3.500z" fill="#222"/></svg></button>
      <div class="mb-[3px] ml-[10px] flex h-[15px] w-[43px] items-center justify-center border border-[#999] bg-gradient-to-b from-[#f4f4f4] to-[#bcbcbc]"><svg class="h-[8px] w-[11px]"><path d="M1.500 0v8M5.500 0v8M9.500 0v8" stroke="#666"/></svg></div>
      <span class="flex-1"></span>
      <button aria-label="库向右滚动"><svg class="h-[7px] w-[4px]"><path d="M0 0v7l4-3.500z" fill="#222"/></svg></button>
    </div>
  </aside>
</main>
</body>
</html>
